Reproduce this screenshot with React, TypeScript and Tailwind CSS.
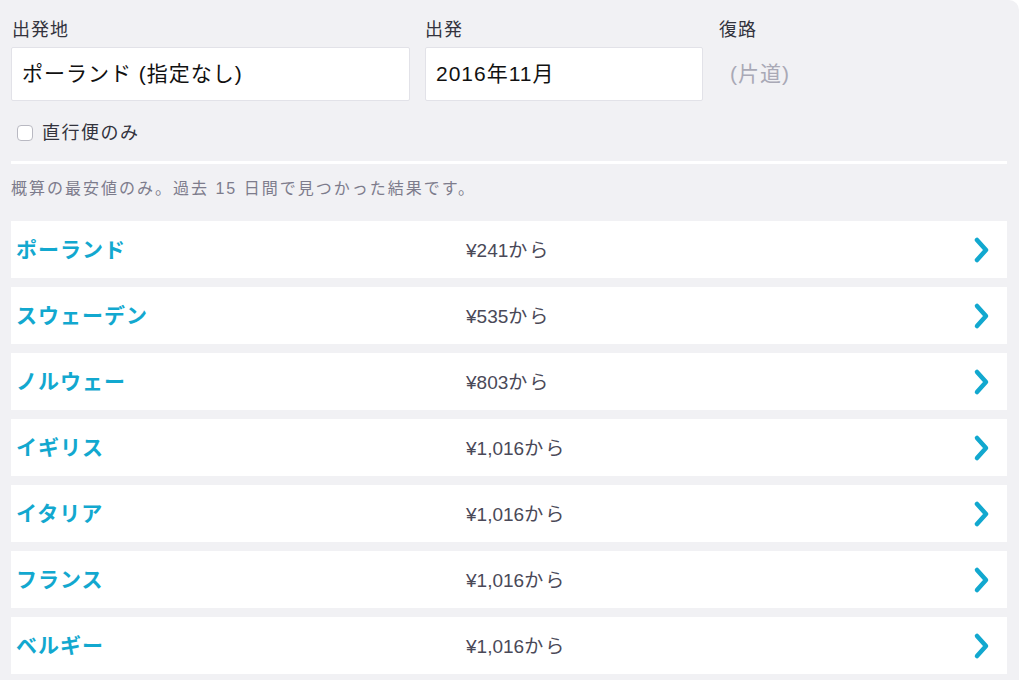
import React from "react";

const FONT = '"Liberation Sans", "Noto Sans CJK JP", sans-serif';

const destinations: { name: string; price: string }[] = [
  { name: "ポーランド", price: "¥241" },
  { name: "スウェーデン", price: "¥535" },
  { name: "ノルウェー", price: "¥803" },
  { name: "イギリス", price: "¥1,016" },
  { name: "イタリア", price: "¥1,016" },
  { name: "フランス", price: "¥1,016" },
  { name: "ベルギー", price: "¥1,016" },
];

function Chevron() {
  return (
    <svg width="18" height="28" viewBox="0 0 18 28" aria-hidden="true">
      <polyline
        points="4,4 13,14 4,24"
        fill="none"
        stroke="#12a8cf"
        strokeWidth="4.5"
        strokeLinecap="round"
        strokeLinejoin="round"
      />
    </svg>
  );
}

function DestinationRow({ name, price }: { name: string; price: string }) {
  return (
    <div className="flex h-[57px] items-center bg-white">
      <div className="w-[455px] pl-[5px] text-[21px] font-bold tracking-[1px] text-[#12a8cf]">
        {name}
      </div>
      <div className="flex-1 pt-[4px] text-[19px] text-[#4a4958]">
        {price}
        <span className="tracking-[2px]">から</span>
      </div>
      <div className="pr-[16px]">
        <Chevron />
      </div>
    </div>
  );
}

export default function App() {
  return (
    <div className="h-[680px] w-[1024px] overflow-hidden bg-white" style={{ fontFamily: FONT }}>
      <div className="h-[680px] w-[1019px] rounded-tr-[10px] bg-[#f1f1f4] pl-[11px] pr-[12px] pt-[20px]">
        {/* search form */}
        <div className="grid grid-cols-[399px_278px_1fr] gap-x-[15px]">
          <div className="flex flex-col">
            <label className="pl-[1px] text-[18px] leading-[20px] tracking-[1px] text-[#33333d]">出発地</label>
            <div className="mt-[7px] flex h-[54px] items-center rounded-[2px] border border-[#e2e2e8] bg-white pl-[10px] text-[21px] tracking-[1px] text-[#111]">
              ポーランド (指定なし)
            </div>
          </div>
          <div className="flex flex-col">
            <label className="text-[18px] leading-[20px] tracking-[1px] text-[#33333d]">出発</label>
            <div className="mt-[7px] flex h-[54px] items-center rounded-[2px] border border-[#e2e2e8] bg-white pl-[10px] text-[21px] tracking-[1px] text-[#111]">
              2016年11月
            </div>
          </div>
          <div className="flex flex-col pl-[1px]">
            <label className="text-[18px] leading-[20px] tracking-[1px] text-[#33333d]">復路</label>
            <div className="mt-[7px] flex h-[54px] items-center pl-[11px] text-[21px] tracking-[1px] text-[#a9a9b6]">
              (片道)
            </div>
          </div>
        </div>

        <label className="mt-[20px] flex h-[24px] items-center gap-[9px] pl-[6px]">
          <span className="h-[16px] w-[16px] rounded-[4px] border border-[#b9b9c2] bg-white" />
          <span className="text-[18px] tracking-[1.5px] text-[#33333d]">直行便のみ</span>
        </label>

        <div className="mt-[16px] h-[3px] bg-white" />

        <p className="mt-[15px] text-[16px] leading-[20px] tracking-[2px] text-[#7d7c8c]">
          概算の最安値のみ。過去 15 日間で見つかった結果です。
        </p>

        {/* destination list */}
        <div className="mt-[22px] flex flex-col gap-[9px]">
          {destinations.map((d) => (
            <DestinationRow key={d.name} name={d.name} price={d.price} />
          ))}
        </div>
      </div>
    </div>
  );
}
